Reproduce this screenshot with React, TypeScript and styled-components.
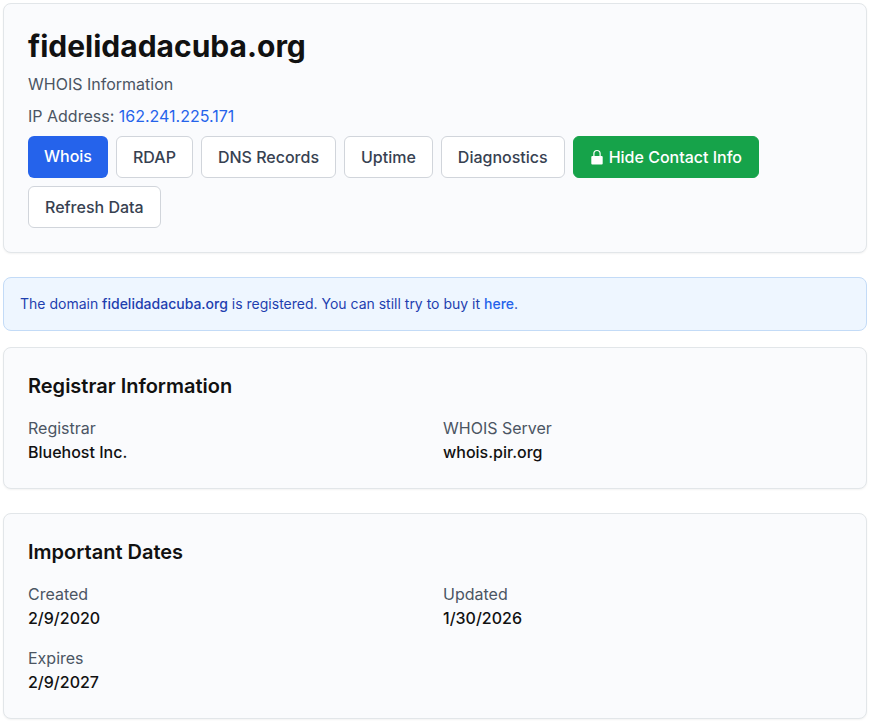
import React from "react";
import styled, { createGlobalStyle, css } from "styled-components";

const GlobalStyle = createGlobalStyle`
  *, *::before, *::after { box-sizing: border-box; }
  body {
    margin: 0;
    background: #ffffff;
    color: #111111;
    font-family: Inter, "Liberation Sans", sans-serif;
    font-size: 16px;
    line-height: 24px;
  }
  h1, h2, p, dl, dd { margin: 0; }
`;

const Page = styled.main`
  display: flex;
  flex-direction: column;
  padding: 3px 3px 2px;
`;

const Card = styled.section`
  padding: 24px;
  margin-bottom: 24px;
  background: #fafbfd;
  border: 1px solid #e2e6e9;
  border-radius: 8px;
  box-shadow: 0 1px 2px rgba(0, 0, 0, 0.05);
  &:last-child { margin-bottom: 0; }
`;

const DomainTitle = styled.h1`
  margin-bottom: 8px;
  font-size: 30px;
  line-height: 36px;
  font-weight: 700;
`;

const Muted = styled.p`
  color: #4b5563;
  & + & { margin-top: 8px; }
`;

const Link = styled.a`
  color: #2563eb;
  text-decoration: none;
  &:hover { text-decoration: underline; }
`;

const Actions = styled.nav`
  display: flex;
  flex-wrap: wrap;
  gap: 8px;
  margin-top: 8px;
`;

type Variant = "active" | "outline" | "success";

const variants = {
  active: css`
    border: 0;
    background: #2563eb;
    color: #ffffff;
  `,
  outline: css`
    border: 1px solid #d1d5db;
    background: #ffffff;
    color: #374151;
  `,
  success: css`
    border: 1px solid #16a34a;
    background: #16a34a;
    color: #ffffff;
  `,
};

const Button = styled.button<{ $variant?: Variant }>`
  display: inline-flex;
  align-items: flex-start;
  gap: 5px;
  padding: 8px 16px;
  border-radius: 6px;
  font: inherit;
  font-weight: 500;
  cursor: pointer;
  ${({ $variant = "outline" }) => variants[$variant]}
`;

const Notice = styled.aside`
  padding: 16px;
  margin-bottom: 16px;
  background: #eef6ff;
  border: 1px solid #c3dbf7;
  border-radius: 8px;
  color: #1e40af;
  font-size: 14px;
  line-height: 20px;
`;

const StrongText = styled.strong`
  font-weight: 500;
`;

const NoticeLink = styled(Link)`
  font-weight: 500;
`;

const SectionTitle = styled.h2`
  margin-bottom: 16px;
  font-size: 20px;
  line-height: 28px;
  font-weight: 600;
`;

const Fields = styled.dl`
  display: grid;
  grid-template-columns: repeat(2, minmax(0, 1fr));
  gap: 16px;
`;

const Label = styled.dt`
  color: #4b5563;
`;

const Value = styled.dd`
  font-weight: 500;
`;

const LockSvg = styled.svg`
  width: 14px;
  height: 24px;
`;

const LockIcon = () => (
  <LockSvg viewBox="0 0 14 24" fill="none" aria-hidden="true">
    <path d="M3.9 12V8.6a3.1 3.1 0 0 1 6.2 0V12" stroke="currentColor" strokeWidth="1.2" />
    <rect x="1.3" y="11" width="11.4" height="8.4" rx="1" fill="currentColor" />
  </LockSvg>
);

const InfoCard = ({ title, fields }: { title: string; fields: [string, string][] }) => (
  <Card>
    <SectionTitle>{title}</SectionTitle>
    <Fields>
      {fields.map(([label, value]) => (
        <div key={label}>
          <Label>{label}</Label>
          <Value>{value}</Value>
        </div>
      ))}
    </Fields>
  </Card>
);

export default function App() {
  return (
    <>
      <GlobalStyle />
      <Page>
        <Card>
          <DomainTitle>fidelidadacuba.org</DomainTitle>
          <Muted>WHOIS Information</Muted>
          <Muted>
            IP Address: <Link href="#ip">162.241.225.171</Link>
          </Muted>
          <Actions aria-label="Domain tools">
            <Button $variant="active">Whois</Button>
            <Button>RDAP</Button>
            <Button>DNS Records</Button>
            <Button>Uptime</Button>
            <Button>Diagnostics</Button>
            <Button $variant="success">
              <LockIcon />
              Hide Contact Info
            </Button>
            <Button>Refresh Data</Button>
          </Actions>
        </Card>
        <Notice>
          The domain <StrongText>fidelidadacuba.org</StrongText> is registered. You can still try to
          buy it <NoticeLink href="#buy">here</NoticeLink>.
        </Notice>
        <InfoCard
          title="Registrar Information"
          fields={[
            ["Registrar", "Bluehost Inc."],
            ["WHOIS Server", "whois.pir.org"],
          ]}
        />
        <InfoCard
          title="Important Dates"
          fields={[
            ["Created", "2/9/2020"],
            ["Updated", "1/30/2026"],
            ["Expires", "2/9/2027"],
          ]}
        />
      </Page>
    </>
  );
}
